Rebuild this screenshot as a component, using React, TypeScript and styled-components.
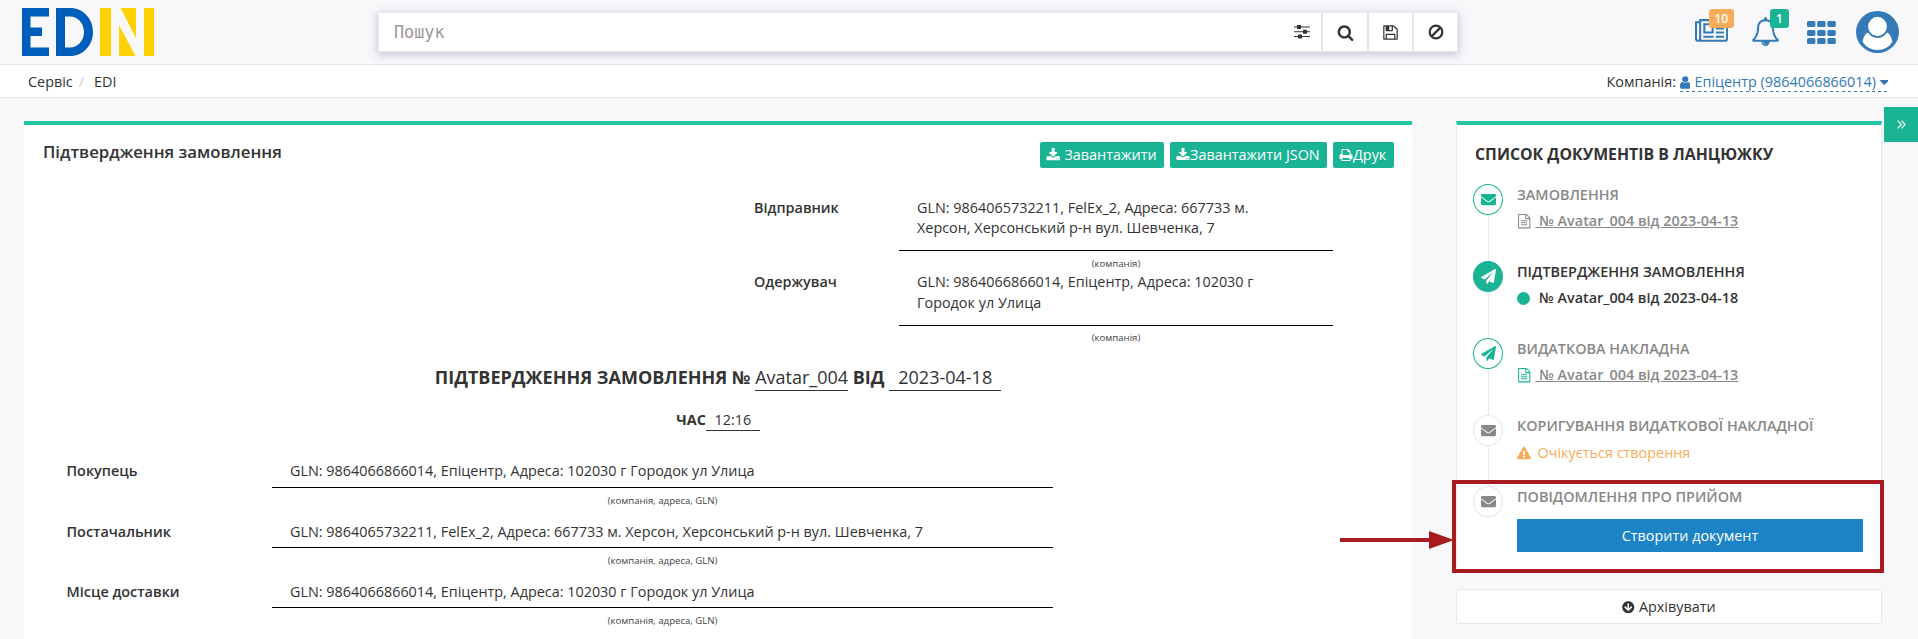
import React from "react";
import styled, { createGlobalStyle, css } from "styled-components";
import { FaEnvelope, FaExclamationTriangle, FaArrowCircleDown } from "react-icons/fa";

const GlobalStyle = createGlobalStyle`
  * { box-sizing: border-box; }
  body {
    margin: 0;
    background: #f8f8fb;
    color: #333;
    font-family: "Open Sans", "Noto Sans", sans-serif;
    font-size: 14.4px;
    line-height: 20.57px;
    overflow: hidden;
  }
`;

const PATHS = {
  newspaper:
    "M1024 512h-384v384h384v-384zm128 640v128h-640v-128h640zm0-768v640h-640v-640h640zm640 768v128h-512v-128h512zm0-256v128h-512v-128h512zm0-256v128h-512v-128h512zm0-256v128h-512v-128h512zm-1536 960v-960h-128v960q0 26 19 45t45 19 45-19 19-45zm1664 0v-1088h-1536v1088q0 33-11 64h1483q26 0 45-19t19-45zm128-1216v1216q0 80-56 136t-136 56h-1664q-80 0-136-56t-56-136v-1088h256v-128h1792z",
  bell:
    "M912 1696q0-16-16-16-59 0-101.5-42.5t-42.5-101.5q0-16-16-16t-16 16q0 73 51.5 124.5t124.5 51.5q16 0 16-16zm-666-288h1300q-266-300-266-832 0-51-24-105t-69-103-121.5-80.5-169.5-31.5-169.5 31.500-121.500 80.500-69 103-24 105q0 532-266 832zm1482 0q0 52-38 90t-90 38h-448q0 106-75 181t-181 75-181-75-75-181h-448q-52 0-90-38t-38-90q50-42 91-88t85-119.500 74.500-158.500 50-206 19.500-260q0-152 117-282.500t307-158.500q-8-19-8-39 0-40 28-68t68-28 68 28 28 68q0 20-8 39 190 28 307 158.500t117 282.500q0 139 19.500 260t50 206 74.500 158.500 85 119.500 91 88z",
  search:
    "M1216 832q0-185-131.500-316.500t-316.500-131.500-316.500 131.500-131.500 316.500 131.500 316.500 316.500 131.500 316.500-131.500 131.500-316.500zm512 832q0 52-38 90t-90 38q-54 0-90-38l-343-342q-179 124-399 124-143 0-273.500-55.500t-225-150-150-225-55.500-273.500 55.500-273.500 150-225 225-150 273.500-55.500 273.500 55.500 225 150 150 225 55.500 273.500q0 220-124 399l343 343q37 37 37 90z",
  save:
    "M512 1536h768v-384h-768v384zm896 0h128v-896q0-14-10-38.500t-20-34.500l-281-281q-10-10-34-20t-39-10v416q0 40-28 68t-68 28h-576q-40 0-68-28t-28-68v-416h-128v1280h128v-416q0-40 28-68t68-28h832q40 0 68 28t28 68v416zm-384-928v-320q0-13-9.500-22.500t-22.500-9.500h-192q-13 0-22.500 9.500t-9.500 22.500v320q0 13 9.500 22.500t22.500 9.500h192q13 0 22.500-9.500t9.500-22.500zm640 32v928q0 40-28 68t-68 28h-1344q-40 0-68-28t-28-68v-1344q0-40 28-68t68-28h928q40 0 88 20t76 48l280 280q28 28 48 76t20 88z",
  user:
    "M1536 1399q0 109-62.500 187t-150.500 78h-854q-88 0-150.500-78t-62.500-187q0-85 8.500-160.500t31.500-152 58.500-131 94-89 134.500-34.500q131 128 313 128t313-128q76 0 134.500 34.500t94 89 58.500 131 31.500 152 8.500 160.500zm-256-887q0 159-112.500 271.500t-271.500 112.500-271.500-112.500-112.500-271.500 112.500-271.500 271.500-112.500 271.500 112.500 112.500 271.500z",
  download:
    "M1344 1344q0-26-19-45t-45-19-45 19-19 45 19 45 45 19 45-19 19-45zm256 0q0-26-19-45t-45-19-45 19-19 45 19 45 45 19 45-19 19-45zm128-224v320q0 40-28 68t-68 28h-1472q-40 0-68-28t-28-68v-320q0-40 28-68t68-28h465l135 136q58 56 136 56t136-56l136-136h464q40 0 68 28t28 68zm-325-569q17 41-14 70l-448 448q-18 19-45 19t-45-19l-448-448q-31-29-14-70 17-39 59-39h256v-448q0-26 19-45t45-19h256q26 0 45 19t19 45v448h256q42 0 59 39z",
  print:
    "M448 1536h896v-256h-896v256zm0-640h896v-384h-160q-40 0-68-28t-28-68v-160h-640v640zm1152 64q0-26-19-45t-45-19-45 19-19 45 19 45 45 19 45-19 19-45zm128 0v416q0 13-9.500 22.500t-22.500 9.500h-224v160q0 40-28 68t-68 28h-960q-40 0-68-28t-28-68v-160h-224q-13 0-22.500-9.500t-9.500-22.500v-416q0-79 56.500-135.500t135.500-56.500h64v-544q0-40 28-68t68-28h672q40 0 88 20t76 48l152 152q28 28 48 76t20 88v256h64q79 0 135.500 56.500t56.500 135.500z",
  plane:
    "M1764 11q33 24 27 64l-256 1536q-5 29-32 45-14 8-31 8-11 0-24-5l-453-185-242 295q-18 23-49 23-13 0-22-4-19-7-30.500-23.500t-11.500-36.500v-349l864-1059-1069 925-395-162q-37-14-40-55-2-40 32-59l1664-960q15-9 32-9 20 0 36 11z",
  file:
    "M1596 380q28 28 48 76t20 88v1152q0 40-28 68t-68 28h-1344q-40 0-68-28t-28-68v-1600q0-40 28-68t68-28h896q40 0 88 20t76 48zm-444-244v376h376q-10-29-22-41l-313-313q-12-12-41-22zm384 1528v-1024h-416q-40 0-68-28t-28-68v-416h-768v1536h1280zm-1024-864q0-14 9-23t23-9h704q14 0 23 9t9 23v64q0 14-9 23t-23 9h-704q-14 0-23-9t-9-23v-64zm736 224q14 0 23 9t9 23v64q0 14-9 23t-23 9h-704q-14 0-23-9t-9-23v-64q0-14 9-23t23-9h704zm0 256q14 0 23 9t9 23v64q0 14-9 23t-23 9h-704q-14 0-23-9t-9-23v-64q0-14 9-23t23-9h704z",
};

const Glyph = ({ name, size, wide = false }: { name: keyof typeof PATHS; size: number; wide?: boolean }) => (
  <svg width={wide ? (size * 2048) / 1792 : size} height={size} viewBox={`0 0 ${wide ? 2048 : 1792} 1792`} fill="currentColor">
    <path d={PATHS[name]} />
  </svg>
);

/* ---------- header ---------- */

const Header = styled.header`
  height: 65px;
  border-bottom: 1px solid #e4e6eb;
  display: flex;
  align-items: flex-start;
  padding: 0 19px 0 22px;
`;

const Logo = styled.svg`
  margin-top: 8px;
  width: 132px;
  height: 48px;
  flex: none;
`;

const SearchBox = styled.div`
  margin: 12px 0 0 224px;
  width: 1080px;
  height: 40px;
  display: flex;
  background: #fff;
  border: 1px solid #e7eaec;
  box-shadow: 0 2px 8px 1px rgba(110, 115, 150, 0.36);
`;

const SearchField = styled.div`
  flex: 1;
  padding: 0 15px;
  line-height: 38px;
  font-family: "DejaVu Sans Mono", monospace;
  font-size: 16.8px;
  color: #999;
`;

const FilterIcon = styled.div`
  width: 38px;
  display: flex;
  align-items: center;
  justify-content: center;
`;

const SearchButton = styled.div<{ $w: number }>`
  width: ${(p) => p.$w}px;
  border-left: 2px solid #e5e6e7;
  display: flex;
  align-items: center;
  justify-content: center;
  color: #333;
`;

const HeaderIcons = styled.div`
  margin-left: auto;
  display: flex;
  color: #337ab7;
`;

const HeaderIcon = styled.div<{ $top: number; $gap: number }>`
  position: relative;
  margin: ${(p) => p.$top}px 0 0 ${(p) => p.$gap}px;
  height: 30px;
  svg { display: block; }
`;

const Badge = styled.span<{ $color: string; $left: number; $top: number; $w: number }>`
  position: absolute;
  left: ${(p) => p.$left}px;
  top: ${(p) => p.$top}px;
  width: ${(p) => p.$w}px;
  height: 19px;
  border-radius: 3px;
  background: ${(p) => p.$color};
  color: #fff;
  font-size: 12px;
  font-weight: 600;
  line-height: 19px;
  text-align: center;
`;

/* ---------- breadcrumb bar ---------- */

const CrumbBar = styled.div`
  height: 33px;
  background: #fff;
  border-bottom: 1px solid #e4e6eb;
  display: flex;
  justify-content: space-between;
  padding: 0 30px 0 28px;
  line-height: 34px;
`;

const Slash = styled.span`
  color: #ccc;
  padding: 0 10px 0 6px;
`;

const Company = styled.div`
  display: flex;
  gap: 4px;
`;

const CompanyLink = styled.span`
  display: flex;
  align-items: center;
  margin-top: 6px;
  height: 21px;
  line-height: 22px;
  padding-top: 1px;
  color: #337ab7;
  background: repeating-linear-gradient(90deg, #337ab7 0 3px, transparent 3px 6px) left bottom / 100% 1px no-repeat;
  svg { flex: none; }
`;

const LinkText = styled.span`
  padding: 0 3.5px 0 4px;
`;

/* ---------- layout ---------- */

const Columns = styled.main`
  display: flex;
  align-items: flex-start;
  padding: 23px 0 0 24px;
  height: 541px;
`;

const Panel = styled.section`
  width: 1388px;
  height: 518px;
  background: #fff;
  border-top: 4px solid #21c5a5;
`;

const PanelHead = styled.div`
  display: flex;
  justify-content: space-between;
  padding: 17px 18px 0 19px;
`;

const PanelTitle = styled.h5`
  margin: 0;
  font-size: 16.8px;
  font-weight: 600;
  line-height: 20px;
`;

const Actions = styled.div`
  display: flex;
  gap: 6px;
`;

const ActionButton = styled.div<{ $w: number; $gap?: number }>`
  display: flex;
  align-items: center;
  width: ${(p) => p.$w}px;
  height: 26px;
  padding: 0 6px;
  gap: ${(p) => p.$gap ?? 0}px;
  border-radius: 2px;
  background: #1ab394;
  color: #fff;
  white-space: nowrap;
  svg { flex: none; }
`;

const Party = styled.div<{ $h: number }>`
  display: flex;
  height: ${(p) => p.$h}px;
  padding-left: 730px;
`;

const PartyLabel = styled.div`
  width: 145px;
  font-weight: 600;
`;

const PartyValue = styled.div`
  width: 434px;
`;

const Parties = styled.div`
  padding-top: 30px;
`;

const Underlined = styled.div<{ $pb: number; $lh?: number }>`
  border-bottom: 1px solid #000;
  padding: 0 50px ${(p) => p.$pb}px 18px;
  line-height: ${(p) => p.$lh ?? 20.57}px;
`;

const Caption = styled.div<{ $pt?: number }>`
  text-align: center;
  font-size: 9.6px;
  line-height: 12px;
  padding-top: ${(p) => p.$pt ?? 7}px;
  color: #444;
`;

const DocTitle = styled.h2`
  margin: 0;
  display: flex;
  justify-content: center;
  font-size: 18px;
  font-weight: 700;
  line-height: 26px;
  height: 45px;
  white-space: pre;
`;

const Fill = styled.span<{ $pad: number }>`
  font-weight: 400;
  border-bottom: 1px solid #333;
  padding: 0 ${(p) => p.$pad}px;
  height: 27px;
`;

const TimeRow = styled.div`
  display: flex;
  justify-content: center;
  font-weight: 700;
  line-height: 22px;
  height: 52px;
  ${Fill} { height: 22px; }
`;

const DetailRow = styled.div<{ $h: number }>`
  display: flex;
  height: ${(p) => p.$h}px;
  padding-left: 42.5px;
`;

const DetailLabel = styled.div`
  width: 205.5px;
  font-weight: 600;
`;

const DetailValue = styled.div`
  width: 781px;
`;

/* ---------- chain sidebar ---------- */

const Side = styled.aside`
  margin-left: 44px;
  width: 426px;
`;

const ChainCard = styled.section`
  height: 451px;
  background: #fff;
  border: 1px solid #e7eaec;
  border-top: 4px solid #21c5a5;
  padding: 18px 18px 0 16px;
`;

const ChainTitle = styled.h3`
  margin: 0 0 19px 2px;
  font-size: 15.84px;
  font-weight: 700;
  line-height: 22px;
  white-space: nowrap;
`;

const Step = styled.div<{ $h: number }>`
  display: flex;
  height: ${(p) => p.$h}px;
`;

const Rail = styled.div`
  width: 30px;
  margin-right: 14px;
  display: flex;
  flex-direction: column;
  align-items: center;
`;

type Tone = "outline" | "solid" | "muted";

const Dot = styled.div<{ $tone: Tone }>`
  flex: none;
  width: 30px;
  height: 31px;
  border-radius: 50%;
  display: flex;
  align-items: center;
  justify-content: center;
  border: 1px solid #1ab394;
  color: #1ab394;
  ${(p) => p.$tone === "solid" && css`background: #1ab394; color: #fff;`}
  ${(p) => p.$tone === "muted" && css`border-color: #e7eaec; color: #888;`}
`;

const Line = styled.div`
  flex: 1;
  width: 1px;
  background: #e7eaec;
`;

const StepBody = styled.div`
  flex: 1;
  padding-top: 1px;
  white-space: nowrap;
`;

const StepTitle = styled.div<{ $active?: boolean }>`
  font-weight: 600;
  color: ${(p) => (p.$active ? "#333" : "#888")};
`;

const StepDoc = styled.div<{ $kind: "link" | "current" | "wait" }>`
  display: flex;
  align-items: center;
  margin-top: ${(p) => (p.$kind === "wait" ? 6.5 : 5.5)}px;
  font-weight: ${(p) => (p.$kind === "wait" ? 400 : 600)};
  color: ${(p) => ({ link: "#888", current: "#333", wait: "#f8ac59" })[p.$kind]};
`;

const DocIcon = styled.span<{ $color: string; $w: number }>`
  width: ${(p) => p.$w}px;
  display: flex;
  color: ${(p) => p.$color};
`;

const CurrentMark = styled.span`
  width: 13px;
  height: 13px;
  margin-right: 9px;
  border-radius: 50%;
  background: #1ab394;
`;

const DocLink = styled.span`
  text-decoration: underline;
  white-space: pre;
`;

const CreateButton = styled.div`
  margin-top: 11.43px;
  width: 346px;
  height: 33px;
  background: #1c84c6;
  color: #fff;
  line-height: 33px;
  text-align: center;
`;

const ArchiveButton = styled.div`
  margin-top: 17px;
  height: 35px;
  padding-top: 1px;
  background: #fff;
  border: 1px solid #e7eaec;
  border-radius: 3px;
  display: flex;
  align-items: center;
  justify-content: center;
  gap: 4px;
`;

const Collapse = styled.div`
  position: absolute;
  right: 0;
  top: 107px;
  width: 34px;
  height: 35px;
  background: #1ab394;
  display: flex;
  align-items: center;
  justify-content: center;
`;

const Callout = styled.div`
  position: absolute;
  left: 1452px;
  top: 480px;
  width: 432px;
  height: 93px;
  border: 4px solid #a81c20;
`;

const Arrow = styled.svg`
  position: absolute;
  left: 1340px;
  top: 530px;
`;

const GLN_BUYER = "GLN: 9864066866014, Епіцентр, Адреса: 102030 г Городок ул Улица";
const GLN_SELLER = "GLN: 9864065732211, FelEx_2, Адреса: 667733 м. Херсон, Херсонський р-н вул. Шевченка, 7";

const details = [
  { label: "Покупець", value: GLN_BUYER, h: 61, pb: 5.43 },
  { label: "Постачальник", value: GLN_SELLER, h: 60, pb: 4.43 },
  { label: "Місце доставки", value: GLN_BUYER, h: 60, pb: 4.43 },
];

export default function App() {
  return (
    <>
      <GlobalStyle />
      <Header>
        <Logo viewBox="0 0 132 48">
          <g fill="#005ebb">
            <path d="M0 0H27V8.500H8.500V19.500H20V28H8.500V39.500H27V48H0Z" />
            <path fillRule="evenodd" d="M34 0H48C61 0 71 10.500 71 24S61 48 48 48H34ZM43 8.500V39.500H48C56 39.500 62 32.500 62 24S56 8.500 48 8.500Z" />
          </g>
          <g fill="#ffd100">
            <path d="M78 0H89V48H78ZM122 0H132V48H122ZM98.500 0H114V30ZM97 17L113.500 48H97Z" />
          </g>
        </Logo>
        <SearchBox>
          <SearchField>Пошук</SearchField>
          <FilterIcon>
            <svg width="16" height="14" viewBox="0 0 16 14" fill="#333">
              <path d="M0 1.500h16v1H0zM0 6.200h16v1H0zM0 11h16v1H0z" />
              <path d="M3 0h4v4H3zM9 4.700h4v4H9zM4 9.500h4v4H4z" />
            </svg>
          </FilterIcon>
          <SearchButton $w={46}><Glyph name="search" size={17} /></SearchButton>
          <SearchButton $w={45}><Glyph name="save" size={17} /></SearchButton>
          <SearchButton $w={45}>
            <svg width="16" height="16" viewBox="0 0 16 16" fill="none" stroke="#333" strokeWidth="2.200">
              <circle cx="8" cy="8" r="6.300" />
              <path d="M3.600 12.400L12.400 3.600" />
            </svg>
          </SearchButton>
        </SearchBox>
        <HeaderIcons>
          <HeaderIcon $top={17} $gap={0}>
            <Glyph name="newspaper" size={29} wide />
            <Badge $color="#f8ac59" $left={14} $top={-8} $w={25}>10</Badge>
          </HeaderIcon>
          <HeaderIcon $top={17} $gap={23}>
            <Glyph name="bell" size={29} />
            <Badge $color="#1ab394" $left={19} $top={-8} $w={19}>1</Badge>
          </HeaderIcon>
          <HeaderIcon $top={21} $gap={26.5}>
            <svg width="29" height="23" viewBox="0 0 29 23" fill="currentColor">
              {[0, 9, 17].map((y) => [0, 10.2, 20.4].map((x) => (
                <rect key={`${x}-${y}`} x={x} y={y} width="8.400" height="6" rx="1.500" />
              )))}
            </svg>
          </HeaderIcon>
          <HeaderIcon $top={11} $gap={20.5}>
            <svg width="43" height="42" viewBox="0 0 43 42">
              <ellipse cx="21.500" cy="21" rx="21.500" ry="21" fill="#337ab7" />
              <path d="M6.600 31C7.500 25.500 9.500 22 12.500 21.500Q21.500 29 30.500 21.500C33.500 22 35.500 25.500 36.400 31Q31 39 21.500 39T6.600 31Z" fill="#fff" />
              <ellipse cx="21.500" cy="15.500" rx="10.300" ry="10.600" fill="#fff" stroke="#337ab7" strokeWidth="1.800" />
            </svg>
          </HeaderIcon>
        </HeaderIcons>
      </Header>

      <CrumbBar>
        <div>Сервіс<Slash>/</Slash>EDI</div>
        <Company>
          Компанія:
          <CompanyLink>
            <svg width="10.500" height="13" viewBox="256 128 1280 1536" fill="currentColor">
              <path d={PATHS.user} />
            </svg>
            <LinkText>Епіцентр (9864066866014)</LinkText>
            <svg width="8.500" height="5" viewBox="0 0 17 10" fill="currentColor">
              <path d="M1 0H16Q17.500 0.500 16.500 2L9.500 9.300Q8.500 10 7.500 9.300L0.500 2Q-0.500 0.500 1 0Z" />
            </svg>
          </CompanyLink>
        </Company>
      </CrumbBar>

      <Columns>
        <Panel>
          <PanelHead>
            <PanelTitle>Підтвердження замовлення</PanelTitle>
            <Actions>
              <ActionButton $w={124} $gap={4}><Glyph name="download" size={14.4} />Завантажити</ActionButton>
              <ActionButton $w={157}><Glyph name="download" size={14} />Завантажити JSON</ActionButton>
              <ActionButton $w={61}><Glyph name="print" size={14} />Друк</ActionButton>
            </Actions>
          </PanelHead>

          <Parties>
            <Party $h={74}>
              <PartyLabel>Відправник</PartyLabel>
              <PartyValue>
                <Underlined $pb={12} $lh={20}>{GLN_SELLER}</Underlined>
                <Caption>(компанія)</Caption>
              </PartyValue>
            </Party>
            <Party $h={92}>
              <PartyLabel>Одержувач</PartyLabel>
              <PartyValue>
                <Underlined $pb={11.86}>{GLN_BUYER}</Underlined>
                <Caption $pt={6}>(компанія)</Caption>
              </PartyValue>
            </Party>
          </Parties>

          <DocTitle>
            ПІДТВЕРДЖЕННЯ ЗАМОВЛЕННЯ № <Fill $pad={0}>Avatar_004</Fill> ВІД <Fill $pad={9}>2023-04-18</Fill>
          </DocTitle>
          <TimeRow>ЧАС<Fill $pad={8.5}>12:16</Fill></TimeRow>

          {details.map((d) => (
            <DetailRow key={d.label} $h={d.h}>
              <DetailLabel>{d.label}</DetailLabel>
              <DetailValue>
                <Underlined $pb={d.pb}>{d.value}</Underlined>
                <Caption>(компанія, адреса, GLN)</Caption>
              </DetailValue>
            </DetailRow>
          ))}
        </Panel>

        <Side>
          <ChainCard>
            <ChainTitle>СПИСОК ДОКУМЕНТІВ В ЛАНЦЮЖКУ</ChainTitle>
            <Step $h={77}>
              <Rail><Dot $tone="outline"><FaEnvelope size={15} /></Dot><Line /></Rail>
              <StepBody>
                <StepTitle>ЗАМОВЛЕННЯ</StepTitle>
                <StepDoc $kind="link">
                  <DocIcon $color="#888" $w={18.4}><Glyph name="file" size={14.4} /></DocIcon>
                  <DocLink> № Avatar_004 від 2023-04-13</DocLink>
                </StepDoc>
              </StepBody>
            </Step>
            <Step $h={77}>
              <Rail><Dot $tone="solid"><Glyph name="plane" size={15} /></Dot><Line /></Rail>
              <StepBody>
                <StepTitle $active>ПІДТВЕРДЖЕННЯ ЗАМОВЛЕННЯ</StepTitle>
                <StepDoc $kind="current"><CurrentMark />№ Avatar_004 від 2023-04-18</StepDoc>
              </StepBody>
            </Step>
            <Step $h={77}>
              <Rail><Dot $tone="outline"><Glyph name="plane" size={15} /></Dot><Line /></Rail>
              <StepBody>
                <StepTitle>ВИДАТКОВА НАКЛАДНА</StepTitle>
                <StepDoc $kind="link">
                  <DocIcon $color="#1ab394" $w={18.4}><Glyph name="file" size={14.4} /></DocIcon>
                  <DocLink> № Avatar_004 від 2023-04-13</DocLink>
                </StepDoc>
              </StepBody>
            </Step>
            <Step $h={71}>
              <Rail><Dot $tone="muted"><FaEnvelope size={15} /></Dot><Line /></Rail>
              <StepBody>
                <StepTitle>КОРИГУВАННЯ ВИДАТКОВОЇ НАКЛАДНОЇ</StepTitle>
                <StepDoc $kind="wait">
                  <DocIcon $color="#f8ac59" $w={20.5}><FaExclamationTriangle size={14} /></DocIcon>
                  Очікується створення
                </StepDoc>
              </StepBody>
            </Step>
            <Step $h={71}>
              <Rail><Dot $tone="muted"><FaEnvelope size={15} /></Dot></Rail>
              <StepBody>
                <StepTitle>ПОВІДОМЛЕННЯ ПРО ПРИЙОМ</StepTitle>
                <CreateButton>Створити документ</CreateButton>
              </StepBody>
            </Step>
          </ChainCard>
          <ArchiveButton><FaArrowCircleDown size={12.5} />Архівувати</ArchiveButton>
        </Side>
      </Columns>

      <Collapse>
        <svg width="9" height="9" viewBox="0 0 9 9" fill="none" stroke="#fff" strokeWidth="1.200">
          <path d="M0.700 0.700L4.300 4.500L0.700 8.300M4.500 0.700L8.100 4.500L4.500 8.300" />
        </svg>
      </Collapse>
      <Callout />
      <Arrow width="114" height="20" viewBox="0 0 114 20" fill="#a81c20">
        <path d="M0 8H89V1L114 10L89 19V12H0Z" />
      </Arrow>
    </>
  );
}
